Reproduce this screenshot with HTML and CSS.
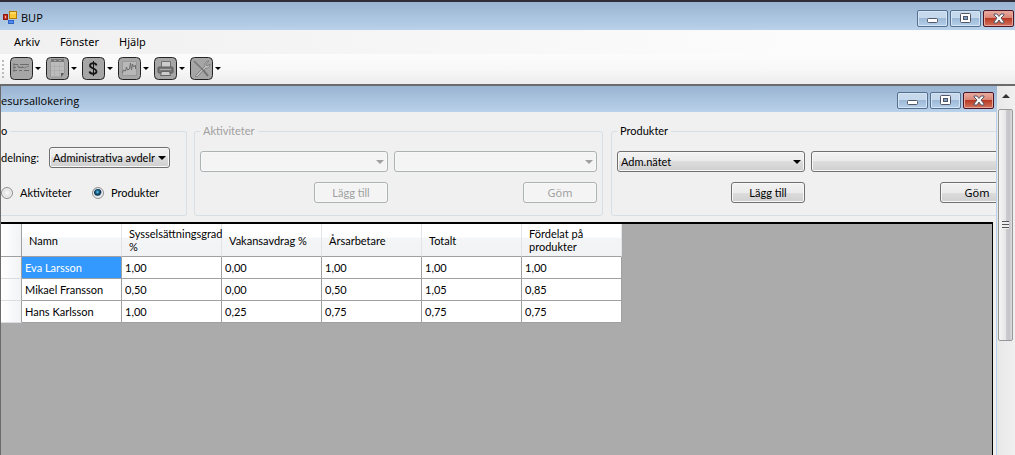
FILE: index.html
```html
<!DOCTYPE html>
<html lang="sv">
<head>
<meta charset="utf-8">
<title>BUP</title>
<link rel="stylesheet" href="styles.css">
</head>
<body>
<svg class="defs" width="0" height="0" aria-hidden="true">
  <defs>
    <symbol id="min" viewBox="0 0 14 13"><rect x="1.5" y="6.500" width="10" height="4" rx="1" fill="#fff" stroke="#535666"/></symbol>
    <symbol id="max" viewBox="0 0 14 13"><rect x="1.500" y="1.500" width="10" height="9" rx="1" fill="#fff" stroke="#535666"/><rect x="4.500" y="4.500" width="4" height="3" fill="#7fa2c8" stroke="#535666"/></symbol>
    <symbol id="close" viewBox="0 0 14 13"><path d="M2 2h3l2 2.500L9 2h3v1L9 6l3 4v1H9L7 8l-2 3H2v-1l3-4-3-3z" fill="#fff" stroke="#535666"/></symbol>
  </defs>
</svg>
<div class="app">
  <header class="titlebar main-title">
    <svg class="app-icon" width="14" height="14" viewBox="0 0 14 14"><rect x="6.500" y=".5" width="7" height="7" fill="#fbc933" stroke="#b47b00"/><path d="M7 2h6" stroke="#ffe9a0"/><rect x=".5" y="3.500" width="4" height="5" fill="#c83222" stroke="#8e1b12"/><rect x="2" y="5" width="1" height="2" fill="#f6b3a5"/><rect x="5.500" y="9.500" width="5" height="3" fill="#4f8ceb" stroke="#2f62c4"/></svg>
    <span class="title-text">BUP</span>
    <div class="win-buttons">
      <button class="win" aria-label="Minimera"><svg width="14" height="13"><use href="#min"/></svg></button>
      <button class="win" aria-label="Maximera"><svg width="14" height="13"><use href="#max"/></svg></button>
      <button class="win close" aria-label="Stäng"><svg width="14" height="13"><use href="#close"/></svg></button>
    </div>
  </header>
  <nav class="menu">
    <button>Arkiv</button><button>Fönster</button><button>Hjälp</button>
  </nav>
  <div class="toolbar">
    <span class="grip"></span>
    <button class="tool" aria-label="Lista"><svg width="23" height="23" viewBox="0 0 23 23"><rect class="tile" x=".5" y=".5" width="22" height="22" rx="4"/><g stroke="#6c6c6c" fill="none"><path d="M3 7.500h5M10 7.500h9M3 10.500h3M8 10.500h5M3 13.500h4M9 13.500h3M14 13.500h5"/><path d="M4 6v9M7 9h2v2M12 9l2 2 5-2" stroke="#7c7c7c"/></g></svg><i></i></button>
    <button class="tool" aria-label="Anteckning"><svg width="23" height="23" viewBox="0 0 23 23"><rect class="tile" x=".5" y=".5" width="22" height="22" rx="4"/><path d="M4.500 4.500h14V16l-3 4h-11z" fill="#bcbcbc" stroke="#999"/><path d="M5 3.500h13" stroke="#777" stroke-width="3"/><path d="M8 3.500h2m3 0h2" stroke="#aaa"/><path d="M5 9.500h13M5 13.500h13M8.500 6v13M13.500 6v13" stroke="#b0b0b0"/><path d="M15 20v-4h3z" fill="#555"/></svg><i></i></button>
    <button class="tool" aria-label="Ekonomi"><svg width="23" height="23" viewBox="0 0 23 23"><rect class="tile" x=".5" y=".5" width="22" height="22" rx="4"/><path d="M14.500 8.500C14 5.500 8 5.500 8 8.500c0 3.500 6.500 2.500 6.500 6 0 3-6.500 3-7 0" fill="none" stroke="#161616" stroke-width="1.800"/><path d="M11.500 4v15" stroke="#161616"/></svg><i></i></button>
    <button class="tool" aria-label="Diagram"><svg width="23" height="23" viewBox="0 0 23 23"><rect class="tile" x=".5" y=".5" width="22" height="22" rx="4"/><rect x="4.500" y="4.500" width="14" height="14" fill="#b8b8b8" stroke="#999"/><path d="M4.500 16l1-3 2 1 1-4 1 3 2-1 1-6 1 7 1-6 1 3 2-2v4" fill="none" stroke="#6c6c6c"/></svg><i></i></button>
    <button class="tool" aria-label="Skriv ut"><svg width="23" height="23" viewBox="0 0 23 23"><rect class="tile" x=".5" y=".5" width="22" height="22" rx="4"/><path d="M7.500 10V4.500h9V10" fill="#ccc" stroke="#707070"/><rect x="4" y="10" width="15" height="6" rx="1" fill="#777" stroke="#5c5c5c"/><path d="M6 12.500h11" stroke="#aaa"/><path d="M7.500 14.500h8l1 4h-10z" fill="#ccc" stroke="#666"/></svg><i></i></button>
    <button class="tool" aria-label="Verktyg"><svg width="23" height="23" viewBox="0 0 23 23"><rect class="tile" x=".5" y=".5" width="22" height="22" rx="4"/><path d="M5 19L15 9c-1-3 1-5 4-5l-3 3 1 2 3-2c0 3-2 5-4 4L7 20z" fill="#bcbcbc" stroke="#777" stroke-width=".8"/><path d="M4 4l9 9" stroke="#777" stroke-width="1.500"/><path d="M13 13l5 6" stroke="#777" stroke-width="2"/></svg><i></i></button>
  </div>
  <div class="workspace">
    <main class="child">
      <header class="titlebar child-title">
        <span class="title-text">esursallokering</span>
        <div class="win-buttons">
          <button class="win" aria-label="Minimera fönster"><svg width="14" height="13"><use href="#min"/></svg></button>
          <button class="win" aria-label="Maximera fönster"><svg width="14" height="13"><use href="#max"/></svg></button>
          <button class="win close" aria-label="Stäng fönster"><svg width="14" height="13"><use href="#close"/></svg></button>
        </div>
      </header>
      <div class="child-body">
        <div class="filters">
          <fieldset class="group first">
            <legend>o</legend>
            <div class="line">
              <label for="unit">delning:</label>
              <span class="combo"><select id="unit"><option>Administrativa avdelr</option></select></span>
            </div>
            <div class="radios">
              <label><input type="radio" name="kind">Aktiviteter</label>
              <label><input type="radio" name="kind" checked>Produkter</label>
            </div>
          </fieldset>
          <fieldset class="group wide" disabled>
            <legend>Aktiviteter</legend>
            <span class="combo"><select aria-label="Aktivitetsgrupp"><option></option></select></span>
            <span class="combo"><select aria-label="Aktivitet"><option></option></select></span>
            <button class="push">Lägg till</button>
            <button class="push ui">Göm</button>
          </fieldset>
          <fieldset class="group wide">
            <legend>Produkter</legend>
            <span class="combo"><select aria-label="Produktgrupp"><option>Adm.nätet</option></select></span>
            <span class="combo"><select aria-label="Produkt"><option></option></select></span>
            <button class="push">Lägg till</button>
            <button class="push ui">Göm</button>
          </fieldset>
        </div>
        <div class="grid-area">
          <table>
            <thead><tr><th class="rowhead"></th><th>Namn</th><th>Sysselsättningsgrad %</th><th>Vakansavdrag %</th><th>Årsarbetare</th><th>Totalt</th><th>Fördelat på produkter</th></tr></thead>
            <tbody>
              <tr><th class="rowhead"></th><td class="selected">Eva Larsson</td><td>1,00</td><td>0,00</td><td>1,00</td><td>1,00</td><td>1,00</td></tr>
              <tr><th class="rowhead"></th><td>Mikael Fransson</td><td>0,50</td><td>0,00</td><td>0,50</td><td>1,05</td><td>0,85</td></tr>
              <tr><th class="rowhead"></th><td>Hans Karlsson</td><td>1,00</td><td>0,25</td><td>0,75</td><td>0,75</td><td>0,75</td></tr>
            </tbody>
          </table>
        </div>
      </div>
    </main>
    <div class="scrollbar">
      <button class="up" aria-label="Rulla upp"><svg width="8" height="4" viewBox="0 0 8 4"><path d="M0 4l4-4 4 4z" fill="#333"/></svg></button>
      <div class="thumb"><span></span></div>
    </div>
  </div>
</div>
</body>
</html>
```
FILE: styles.css
```css
* { box-sizing: border-box; }
body {
  margin: 0;
  font: 11px/14px Lato, "Liberation Sans", sans-serif;
  color: #000;
  background: #f0f0f0;
}
button, select, input { font: inherit; color: inherit; margin: 0; }
.defs { position: absolute; }
.app {
  display: flex;
  flex-direction: column;
  height: 100vh;
  overflow: hidden;
  border-top: 2px solid #302d38;
}

.titlebar {
  display: flex;
  align-items: center;
  flex: none;
  background: linear-gradient(#99b4d1, #b9d1ea);
  font: 11px/16px "Open Sans", "Noto Sans", sans-serif;
}
.main-title { height: 28px; padding: 4px 0 0 3px; }
.child-title { height: 26px; padding: 3px 3px 0 0; }
.app-icon { margin-right: 4px; }
.title-text { flex: 1; }
.win-buttons { display: flex; gap: 2px; }
.win {
  display: flex;
  align-items: center;
  justify-content: center;
  width: 31px;
  height: 17px;
  padding: 0;
  border: 1px solid #55708f;
  border-radius: 2px;
  background: linear-gradient(#c5d8ec 0 50%, #9cb9d7 50%, #b6d0ea);
  box-shadow: inset 0 0 0 1px #d5e5f5;
}
.main-title .win-buttons { padding-right: 1px; }
.win.close {
  border-color: #4d1523;
  background: linear-gradient(#e9aca1, #d98273 50%, #b83a24 50%, #d4735d);
  box-shadow: inset 0 0 0 1px #e5a79b;
}

.menu {
  display: flex;
  align-items: center;
  flex: none;
  height: 24px;
  padding-left: 8px;
  background: linear-gradient(90deg, #f0f0f0, #fcfcfc 80%);
  font: 11px/16px "Noto Sans", sans-serif;
}
.menu button { padding: 0 6px; margin-right: 8px; border: 0; background: none; }
.toolbar {
  display: flex;
  align-items: center;
  flex: none;
  height: 30px;
  padding: 0 0 1px 2px;
  background: linear-gradient(#fcfcfc, #f8f8f8 50%, #ececec);
}
.grip {
  width: 2px;
  height: 18px;
  margin-right: 6px;
  background: repeating-linear-gradient(#bbb 0 2px, transparent 2px 4px);
}
.tool { display: flex; align-items: center; width: 36px; padding: 0; border: 0; background: none; }
.tool i { margin-left: 2px; border: 3px solid transparent; border-top-color: #000; border-bottom: 0; }
.tile { fill: #a6a6a6; stroke: #242424; stroke-width: 1; }

.workspace {
  display: flex;
  flex: 1;
  min-height: 0;
  border-top: 2px solid #6b6b6b;
  border-left: 1px solid #6b6b6b;
}
.child { display: flex; flex-direction: column; flex: 1; min-width: 0; }
.child-body {
  display: flex;
  flex-direction: column;
  flex: 1;
  min-height: 0;
  overflow: hidden;
  border-right: 1px solid #b9d1ea;
}
.filters { display: flex; gap: 7px; flex: none; padding: 12px 0 6px; overflow: hidden; }
.group {
  flex: none;
  margin: 0;
  padding: 0;
  height: 92px;
  min-width: 0;
  border: 1px solid #d5dfe5;
  border-radius: 3px;
}
.group legend { height: 14px; padding: 0 3px; }
.group.first { width: 186px; border-left: 0; border-radius: 0 3px 3px 0; }
.group.first legend { padding-left: 0; }
.line { display: flex; align-items: center; padding-top: 9px; }
.line label { width: 48px; }
.line .combo { width: 121px; }
.radios { display: flex; padding-top: 18px; }
.radios label { display: flex; align-items: center; gap: 7px; width: 91px; }
.radios input {
  appearance: none;
  width: 12px;
  height: 12px;
  border: 1px solid #8e8f8f;
  border-radius: 50%;
  background: radial-gradient(#fafafa, #ccc);
  box-shadow: inset 0 0 0 1px #f4f4f4;
}
.radios input:checked { background: radial-gradient(circle at 45% 40%, #77cdf0, #14628b 22%, #0b2f4b 38%, #dfe6ea 55%); }
.wide {
  display: grid;
  grid-template-columns: 188px 203px;
  grid-auto-rows: 21px;
  gap: 10px 6px;
  width: 409px;
  padding: 13px 5px 0;
}
.group + .wide + .wide { margin-left: 1px; }
.combo { display: block; position: relative; }
.combo::after {
  content: "";
  position: absolute;
  right: 4px;
  top: 9px;
  border: 4px solid transparent;
  border-top-color: #000;
  border-bottom: 0;
}
select {
  appearance: none;
  display: block;
  width: 100%;
  height: 21px;
  padding: 0 12px 0 3px;
  border: 1px solid #707070;
  border-radius: 3px;
  background: linear-gradient(#f2f2f2, #ebebeb 50%, #dddddd 50%, #cfcfcf);
  box-shadow: inset 0 0 0 1px #f8f8f8;
}
.push {
  justify-self: end;
  width: 74px;
  height: 21px;
  padding: 0;
  border: 1px solid #707070;
  border-radius: 3px;
  background: linear-gradient(#f2f2f2, #ebebeb 50%, #dddddd 50%, #cfcfcf);
  box-shadow: inset 0 0 0 1px #f8f8f8;
}
.push.ui { font-family: "Noto Sans", sans-serif; }
.group:disabled { color: #a0a0a0; }
.group:disabled select, .group:disabled .push { border-color: #adb2b5; background: #f4f4f4; opacity: 1; color: #a0a0a0; }
.group:disabled .combo::after { border-top-color: #a0a0a0; }

.grid-area {
  flex: 1;
  min-height: 0;
  margin-right: 3px;
  overflow: hidden;
  background: #ababab;
  border-top: 2px solid #000;
  border-right: 1px solid #000;
}
table { width: 621px; border-collapse: separate; border-spacing: 0; table-layout: fixed; }
th, td { text-align: left; font-weight: 400; }
thead th {
  height: 33px;
  padding: 0 0 0 7px;
  line-height: 13px;
  border-right: 1px solid #e3e4e6;
  border-bottom: 1px solid #a0a0a0;
  background: linear-gradient(#fff 40%, #f4f5f7 45%, #f1f2f4);
}
tbody td {
  height: 22px;
  padding: 0 0 0 3px;
  border-right: 1px solid #a0a0a0;
  border-bottom: 1px solid #a0a0a0;
  background: #fff;
}
tbody .selected { background: #39f; color: #fff; }
th.rowhead { width: 21px; padding: 0; border-right: 1px solid #a0a0a0; background: linear-gradient(90deg, #fff, #f2f3f5); }
tbody .rowhead { border-bottom: 1px solid #dcdde0; }

.scrollbar { display: flex; flex-direction: column; width: 18px; flex: none; padding: 0 2px 0 1px; background: linear-gradient(90deg, #e8e8e8, #f0f0f0); }
.up { display: flex; align-items: center; justify-content: center; height: 23px; padding: 0 0 4px; border: 0; background: none; }
.thumb {
  display: flex;
  align-items: center;
  justify-content: center;
  height: 63%;
  border: 1px solid #979797;
  border-radius: 2px;
  background: linear-gradient(90deg, #f5f5f5, #e6e6e8 50%, #ccccd0 55%, #c4c4ca 80%, #e0e0e0);
}
.thumb span { width: 7px; height: 8px; background: repeating-linear-gradient(#555 0 1px, #eee 1px 3px); }
```
